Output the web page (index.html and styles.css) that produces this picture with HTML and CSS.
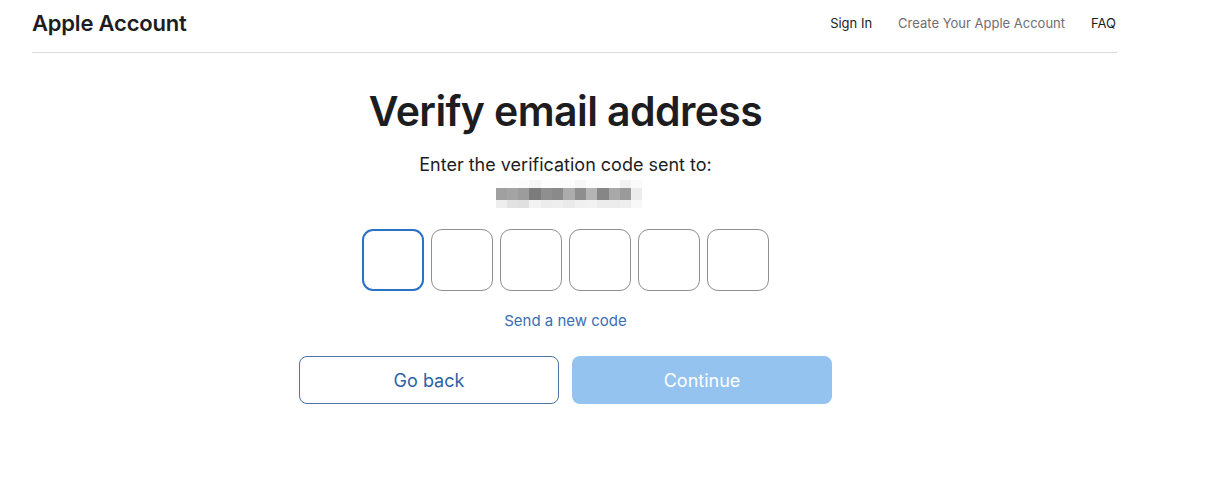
FILE: index.html
```html
<!DOCTYPE html>
<html lang="en">
<head>
<meta charset="utf-8">
<title>Apple Account</title>
<link rel="stylesheet" href="styles.css">
</head>
<body>
<header class="topbar">
  <div class="brand">Apple Account</div>
  <nav class="nav">
    <a class="nav-link">Sign In</a>
    <a class="nav-link muted">Create Your Apple Account</a>
    <a class="nav-link">FAQ</a>
  </nav>
</header>
<main class="main">
  <h1 class="title">Verify email address</h1>
  <p class="subtitle">Enter the verification code sent to:</p>
  <div class="masked">
    <div class="mrow">
      <span style="background:#fdfdfd"></span><span style="background:#fdfdfd"></span><span style="background:#fcfcfc"></span><span style="background:#f6f6f6"></span><span style="background:#fdfdfd"></span><span style="background:#fdfdfd"></span><span style="background:#fcfcfc"></span><span style="background:#f6f6f6"></span><span style="background:#fdfdfd"></span><span style="background:#fdfdfd"></span><span style="background:#fdfdfd"></span><span style="background:#f2f2f2"></span><span style="background:#fafafa"></span>
    </div>
    <div class="mrow mid">
      <span style="background:#a0a0a0"></span><span style="background:#a4a4a4"></span><span style="background:#9c9c9c"></span><span style="background:#7c7c7c"></span><span style="background:#8f8f8f"></span><span style="background:#8a8a8a"></span><span style="background:#acacac"></span><span style="background:#8e8e8e"></span><span style="background:#b4b4b4"></span><span style="background:#868686"></span><span style="background:#a8a8a8"></span><span style="background:#9a9a9a"></span><span style="background:#ececec"></span>
    </div>
    <div class="mrow">
      <span style="background:#eeeeee"></span><span style="background:#e2e2e2"></span><span style="background:#e0e0e0"></span><span style="background:#f2f2f2"></span><span style="background:#ececec"></span><span style="background:#eeeeee"></span><span style="background:#eaeaea"></span><span style="background:#f0f0f0"></span><span style="background:#f2f2f2"></span><span style="background:#ececec"></span><span style="background:#ececec"></span><span style="background:#eeeeee"></span><span style="background:#f8f8f8"></span>
    </div>
  </div>
  <div class="code">
    <div class="digit active"></div>
    <div class="digit"></div>
    <div class="digit"></div>
    <div class="digit"></div>
    <div class="digit"></div>
    <div class="digit"></div>
  </div>
  <a class="resend">Send a new code</a>
  <div class="actions">
    <button class="btn secondary">Go back</button>
    <button class="btn primary">Continue</button>
  </div>
</main>
</body>
</html>
```

FILE: styles.css
```css
* { box-sizing: border-box; }
html, body { margin: 0; padding: 0; background: #ffffff; }
body {
  font-family: Inter, "Liberation Sans", Arial, sans-serif;
  color: #1d1d1f;
  width: 1219px;
  height: 481px;
  overflow: hidden;
}
.topbar {
  margin-left: 32px;
  width: 1085px;
  height: 53px;
  border-bottom: 1px solid #d9d9d9;
  display: flex;
  align-items: center;
  justify-content: space-between;
  padding-bottom: 6px;
}
.brand {
  font-size: 22px;
  font-weight: 600;
  letter-spacing: -0.2px;
  color: #1d1d1f;
}
.nav { display: flex; gap: 26px; font-size: 13px; padding-right: 1px; }
.nav-link { color: #1d1d1f; text-decoration: none; }
.nav-link.muted { color: #6e6e73; }
.main {
  width: 1131px;
  display: flex;
  flex-direction: column;
  align-items: center;
}
.title {
  margin: 30px 0 0;
  font-size: 41px;
  font-weight: 600;
  letter-spacing: -0.6px;
  line-height: 56px;
  color: #1d1d1f;
}
.subtitle {
  margin: 14px 0 0;
  font-size: 18px;
  line-height: 24px;
  font-weight: 400;
  color: #1d1d1f;
}
.masked {
  margin-top: 3px;
  margin-left: 7px;
  display: flex;
  flex-direction: column;
}
.mrow { display: flex; height: 8px; }
.mrow.mid { height: 12px; }
.mrow span { display: block; width: 11.3px; height: 100%; }
.code {
  margin-top: 21px;
  display: flex;
  gap: 7px;
}
.digit {
  width: 62px;
  height: 62px;
  border: 1px solid #8e8e93;
  border-radius: 11px;
}
.digit.active { border: 2px solid #2a72c8; }
.resend {
  margin-top: 20px;
  font-size: 15px;
  line-height: 20px;
  color: #3b6eb2;
}
.actions {
  margin-top: 25px;
  display: flex;
  gap: 13px;
}
.btn {
  width: 260px;
  height: 48px;
  border-radius: 8px;
  font-family: inherit;
  font-size: 18px;
  cursor: pointer;
}
.btn.secondary {
  background: #fff;
  border: 1px solid #4f72a8;
  color: #2f62a6;
}
.btn.primary {
  background: #94c3f0;
  border: none;
  color: #ffffff;
}
```
